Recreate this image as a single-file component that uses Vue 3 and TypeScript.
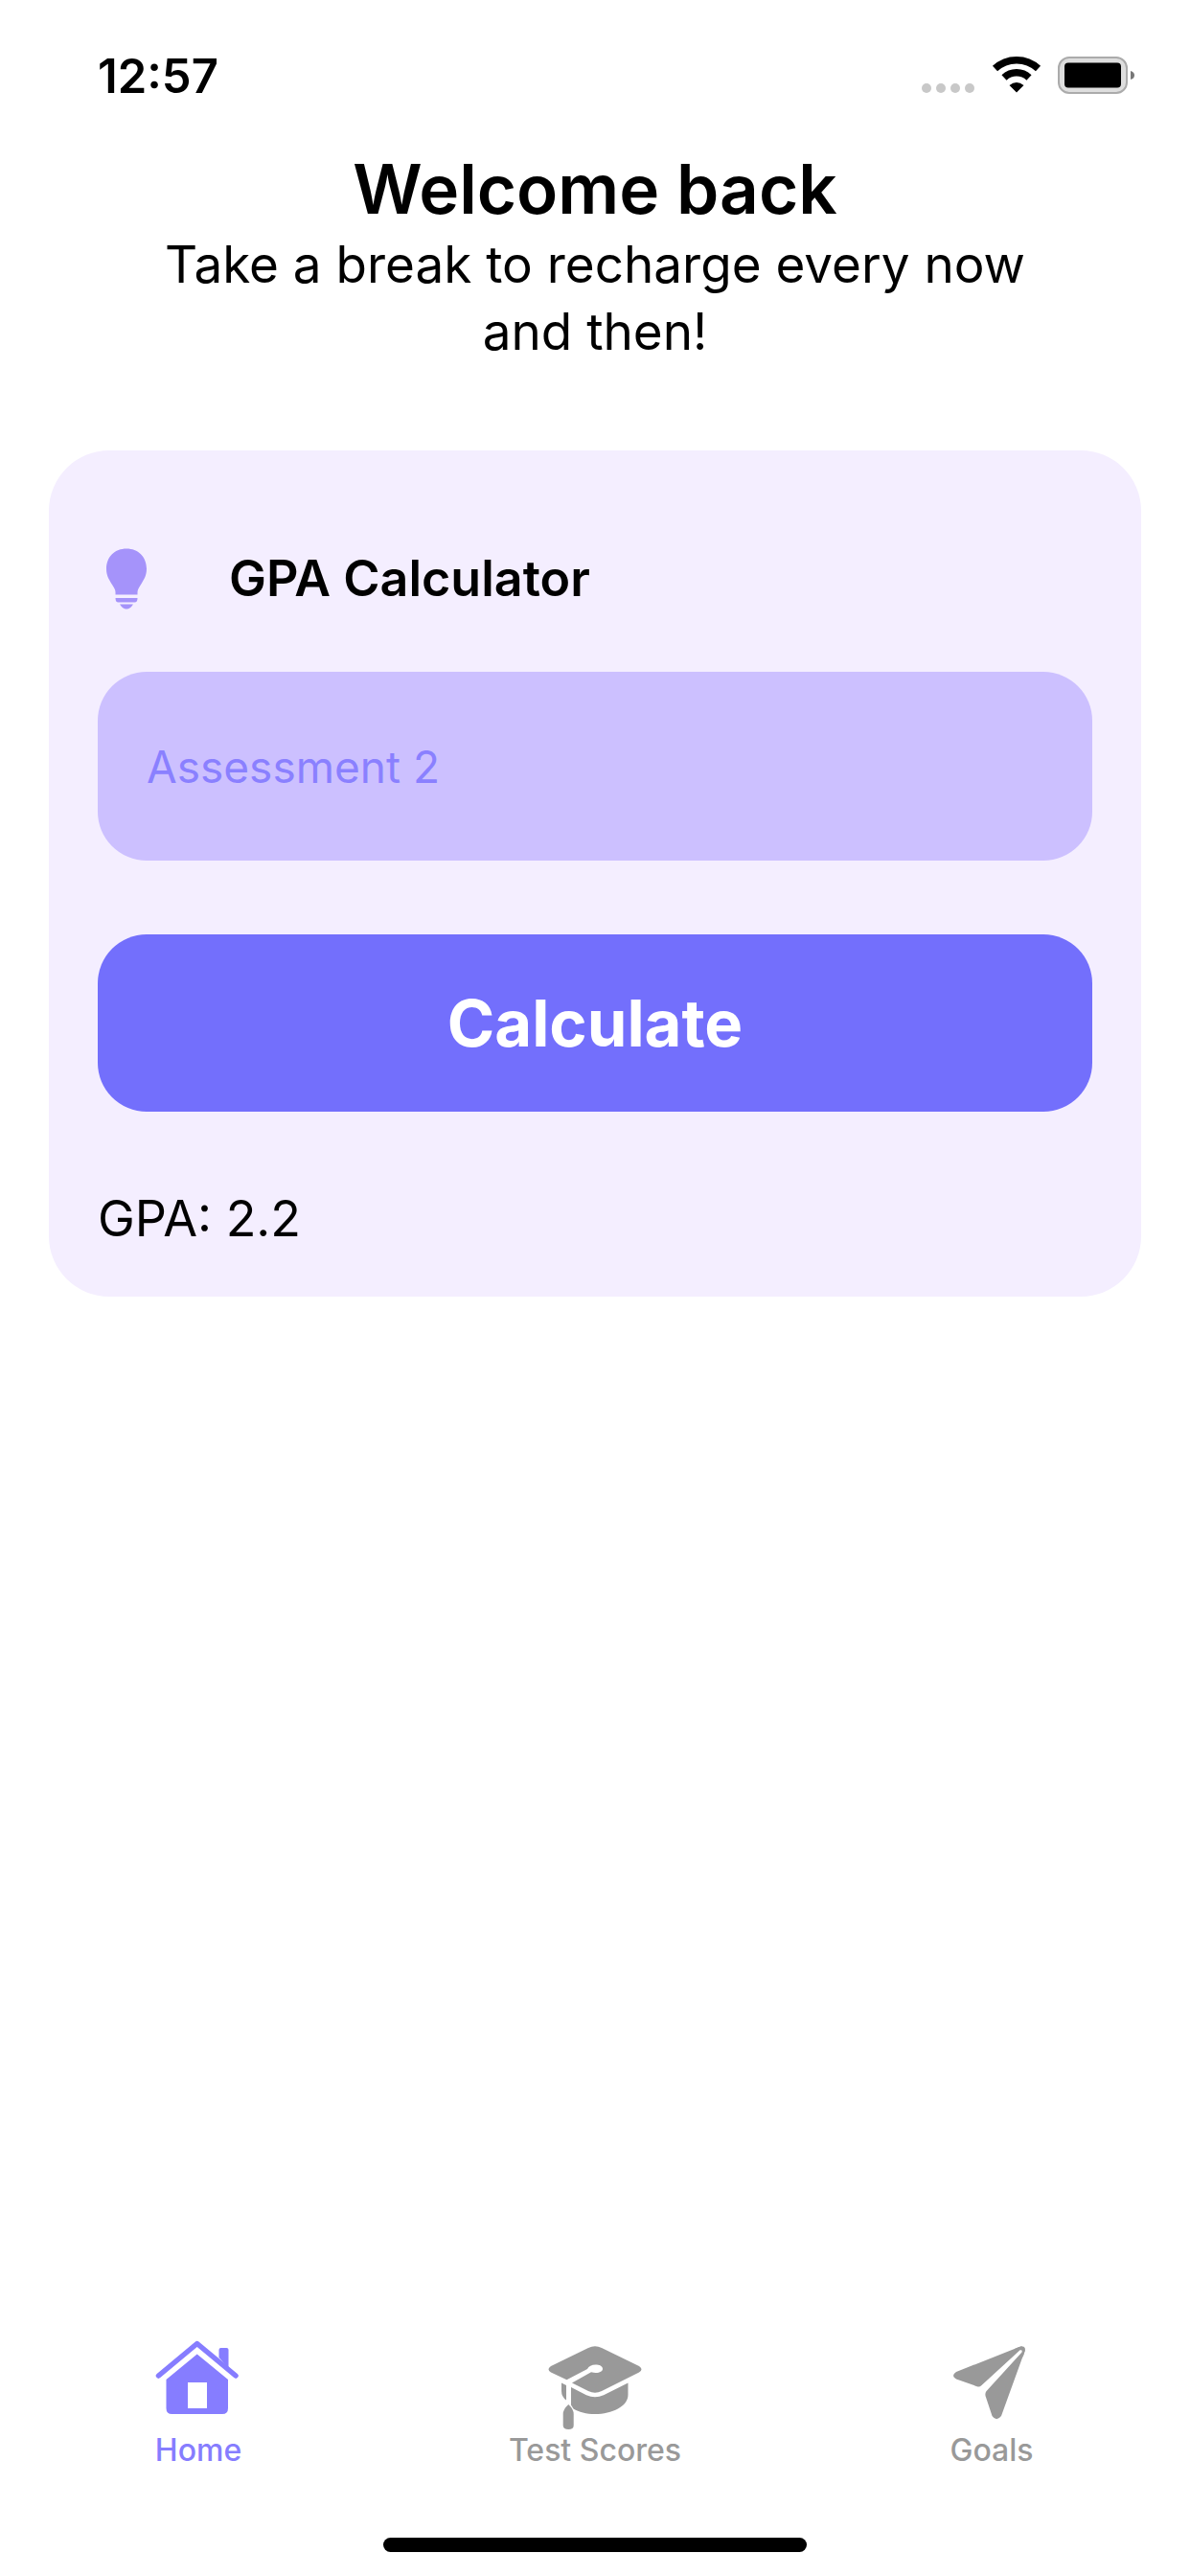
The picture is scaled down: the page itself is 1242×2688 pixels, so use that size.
<script setup lang="ts">
import { ref } from 'vue'

type TabId = 'home' | 'scores' | 'goals'

interface Tab {
  id: TabId
  label: string
}

const tabs: Tab[] = [
  { id: 'home', label: 'Home' },
  { id: 'scores', label: 'Test Scores' },
  { id: 'goals', label: 'Goals' },
]

const active = ref<TabId>('home')
const score = ref('')
const gpa = ref(2.2)

function calculate(): void {
  const value = Number.parseFloat(score.value)
  if (!Number.isNaN(value)) {
    gpa.value = Math.min(4, Math.max(0, value / 25))
  }
}
</script>

<template>
  <div class="app">
    <div class="status">
      <time class="clock">12:57</time>
      <svg class="signals" viewBox="0 2 222 44" aria-hidden="true">
        <g fill="#c8c8c8">
          <circle cx="5" cy="36" r="5" />
          <circle cx="20" cy="36" r="5" />
          <circle cx="35" cy="36" r="5" />
          <circle cx="50" cy="36" r="5" />
        </g>
        <g fill="none" stroke="#000" stroke-width="7.5">
          <path d="M76.500 15.500A33 33 0 0 1 121.500 15.500" />
          <path d="M86 25A19 19 0 0 1 112 25" />
        </g>
        <path d="M91.500 33Q99 27 106.500 33L99 40.500Z" />
        <rect x="143" y="4" width="71" height="37" rx="11" fill="#dedede" stroke="#ababab" stroke-width="2" />
        <rect x="149" y="9.500" width="59" height="26" rx="4" />
        <path d="M218 18Q222 19 222 22.500T218 27Z" fill="#777" />
      </svg>
    </div>

    <header class="intro">
      <h1 class="title">Welcome back</h1>
      <p class="subtitle">Take a break to recharge every now and then!</p>
    </header>

    <form class="card" @submit.prevent="calculate">
      <div class="card-head">
        <svg class="bulb" viewBox="0 0 60 64" aria-hidden="true">
          <path d="M30 0.500C18 0.500 9 9 9 21.500C9 29 12 33 15 38C17 41.500 18.500 43 18.500 46V48.500H41.500V46C41.500 43 43 41.500 45 38C48 33 51 29 51 21.500C51 9 42 0.500 30 0.500Z" />
          <path d="M18.500 52H41.500Q41.500 56.500 38.500 56.500H21.500Q18.500 56.500 18.500 52Z" />
          <path d="M23 58.500H37Q34 63.500 30 63.500T23 58.500Z" />
        </svg>
        <label class="card-title" for="assessment">GPA Calculator</label>
      </div>
      <input id="assessment" v-model="score" class="field" type="text" placeholder="Assessment 2" />
      <button class="submit" type="submit">Calculate</button>
      <output class="result" for="assessment">GPA: {{ gpa.toFixed(1) }}</output>
    </form>

    <nav class="tabs">
      <a
        v-for="tab in tabs"
        :key="tab.id"
        class="tab"
        :class="{ active: tab.id === active }"
        :href="`#${tab.id}`"
        @click="active = tab.id"
      >
        <svg v-if="tab.id === 'home'" class="tab-icon" viewBox="0 0 100 100" aria-hidden="true">
          <path d="M8.500 46L48.700 12.500L89 46" fill="none" stroke="currentColor" stroke-width="5.500" stroke-linecap="round" stroke-linejoin="round" />
          <path d="M71.500 27V19Q71.500 17 73.500 17H79.500Q81.500 17 81.500 19V38Z" />
          <path fill-rule="evenodd" d="M48.700 23.500L81 50V80Q81 86 75 86H22.500Q16.500 86 16.500 80V50ZM39 53V80H59V53Z" />
        </svg>
        <svg v-else-if="tab.id === 'scores'" class="tab-icon" viewBox="0 0 100 100" aria-hidden="true">
          <path d="M43 17Q50 13.500 57 17L96 36Q101 39.300 96 42.500L57 62Q50 65.500 43 62L26 53.500L46 42.300C53 44 58 42 58 38.700C58 36 54.500 34.500 50.500 34.500C46.500 34.500 43.500 36 42 39L20.500 50.300L4 42.500Q-1 39.300 4 36Z" />
          <path d="M15 53.500L20 56V71.500Q15 68 15 62Z" />
          <path d="M25 58L41 66.200Q50 70.500 59 66.200L84.500 53.500V66C84.500 78 68 86 50 86C41 86 33 84 27.500 80.500L25 76.500Z" />
          <path d="M22.300 76Q27.700 81 27.700 86V98Q27.700 102 22.300 102T16.700 98V86Q16.700 81 22.300 76Z" />
        </svg>
        <svg v-else class="tab-icon" viewBox="0 0 100 100" aria-hidden="true">
          <path d="M80 15.500L13 42Q7 46 13 49.500L35.500 57.500Q37.500 58 39.500 56L81.500 17.500Q83 14.500 80 15.500Z" />
          <path d="M84.800 19.500L60 88Q55 94.500 50.500 88L43.500 67Q42.800 63.500 45.500 61L82 21Q84.500 17.500 84.800 19.500Z" />
          <path d="M78 16.200Q86 13.500 84.800 20L82.500 27L81.500 19.500L74 18Z" />
        </svg>
        <span>{{ tab.label }}</span>
      </a>
    </nav>
    <div class="home-indicator"></div>
  </div>
</template>

<style>
body {
  margin: 0;
  background: #fff;
}
</style>

<style scoped>
.app {
  box-sizing: border-box;
  display: flex;
  flex-direction: column;
  min-height: 100vh;
  padding-bottom: 25px;
  color: #000;
  font-family: Inter, "Liberation Sans", sans-serif;
}

.status {
  display: flex;
  align-items: center;
  justify-content: space-between;
  padding: 50px 58px 0 102px;
}

.clock {
  font-size: 49px;
  font-weight: 600;
  line-height: 60px;
}

.signals {
  width: 222px;
  height: 44px;
}

.intro {
  padding: 43px 153px 0;
  text-align: center;
}

.title {
  margin: 0;
  font-size: 71px;
  font-weight: 600;
  line-height: 88px;
}

.subtitle {
  margin: 0;
  font-size: 53px;
  line-height: 70px;
}

.card {
  display: flex;
  flex-direction: column;
  margin: 89px 51px 0;
  padding: 102px 51px 50px;
  border-radius: 63px;
  background: #f4eeff;
}

.card-head {
  display: flex;
  align-items: center;
  gap: 77px;
}

.bulb {
  width: 60px;
  height: 64px;
  fill: #a593fa;
}

.card-title {
  font-size: 52px;
  font-weight: 600;
  line-height: 64px;
}

.field {
  box-sizing: border-box;
  width: 100%;
  height: 197px;
  margin-top: 65px;
  padding: 0 51px;
  border: 0;
  border-radius: 51px;
  background: #ccc0ff;
  color: #8a80ff;
  font-family: inherit;
  font-size: 46px;
}

.field::placeholder {
  color: #8a80ff;
  opacity: 1;
}

.submit {
  height: 185px;
  margin-top: 77px;
  padding: 0;
  border: 0;
  border-radius: 51px;
  background: #736ffc;
  color: #fff;
  font-family: inherit;
  font-size: 67px;
  font-weight: 700;
}

.result {
  margin-top: 81px;
  font-size: 52px;
  line-height: 62px;
}

.tabs {
  display: grid;
  grid-template-columns: repeat(3, 1fr);
  margin-top: auto;
}

.tab {
  display: flex;
  flex-direction: column;
  align-items: center;
  gap: 4px;
  color: #999;
  font-size: 32px;
  font-weight: 500;
  line-height: 40px;
  text-decoration: none;
}

.tab.active {
  color: #867dff;
}

.tab-icon {
  width: 100px;
  height: 100px;
  overflow: visible;
  fill: currentColor;
}

.home-indicator {
  align-self: center;
  width: 442px;
  height: 15px;
  margin-top: 71px;
  border-radius: 8px;
  background: #000;
}
</style>
